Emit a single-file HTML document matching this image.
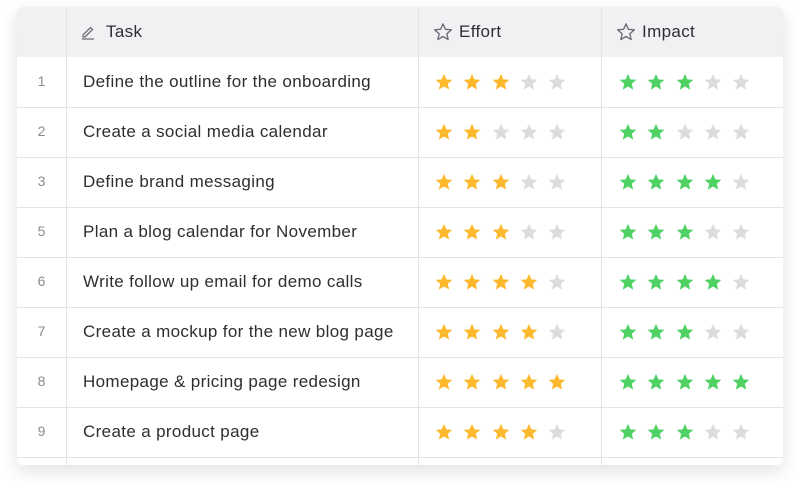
<!DOCTYPE html>
<html><head><style>
body{margin:0;width:800px;height:492px;background:#fff;font-family:"Liberation Sans",sans-serif;position:relative;overflow:hidden}
.card{position:absolute;left:17px;top:7px;width:766px;height:458px;background:#fff;border-radius:6px;box-shadow:0 6px 18px rgba(0,0,0,0.12);overflow:hidden}
.hdr{position:absolute;left:0;top:0;width:766px;height:50px;background:#f0f1f3}
.vl{position:absolute;top:0;width:1px;height:458px;background:#e3e3e5}
.hl{position:absolute;left:0;width:766px;height:1px;background:#e3e3e5}
.t{position:absolute;font-size:17px;letter-spacing:0.35px;color:#2e2e33;line-height:20px;white-space:nowrap}
.n{position:absolute;font-size:14px;color:#8a8a93;width:49px;text-align:center;left:0}
svg.s{position:absolute;width:20px;height:20px}
</style></head><body>
<div class="card" id="c">
<div class="hdr"></div>
</div>
<script>
const c=document.getElementById('c');
let h='';
[49,401,584].forEach(x=>h+=`<div class="vl" style="left:${x}px"></div>`);
for(let i=1;i<9;i++)h+=`<div class="hl" style="top:${50+i*50}px"></div>`;
h+=`<svg style="position:absolute;left:63px;top:17px" width="16" height="16" viewBox="0 0 16 16" fill="none" stroke="#6b6b78" stroke-width="1.3"><path d="M3 11 L10.5 3.5 L12.5 5.5 L5 13 L3 13 Z"/><path d="M2 15 H14"/></svg>`;
h+=`<div class="t" style="left:89px;top:15px">Task</div>`;
const star=(x,y,col,fill)=>`<svg class="s" style="left:${x}px;top:${y}px" viewBox="0 0 24 24"><path d="M12 2.2l2.9 6.6 7.1.6-5.4 4.7 1.6 7-6.2-3.7-6.2 3.7 1.6-7L2 9.4l7.1-.6z" fill="${fill}" stroke="${col}" stroke-width="${fill=='none'?1.6:0}" stroke-linejoin="round"/></svg>`;
h+=star(416,15,'#6b6b78','none')+`<div class="t" style="left:442px;top:15px">Effort</div>`;
h+=star(599,15,'#6b6b78','none')+`<div class="t" style="left:625px;top:15px">Impact</div>`;
const rows=[[1,'Define the outline for the onboarding',3,3],[2,'Create a social media calendar',2,2],[3,'Define brand messaging',3,4],[5,'Plan a blog calendar for November',3,3],[6,'Write follow up email for demo calls',4,4],[7,'Create a mockup for the new blog page',4,3],[8,'Homepage & pricing page redesign',5,5],[9,'Create a product page',4,3]];
rows.forEach((r,i)=>{const y=50+i*50;
h+=`<div class="n" style="top:${y+16}px">${r[0]}</div><div class="t" style="left:66px;top:${y+15}px">${r[1]}</div>`;
for(let k=0;k<5;k++){
h+=star(417+k*28.3,y+15,'',k<r[2]?'#fdb92e':'#dcdcdc');
h+=star(601+k*28.3,y+15,'',k<r[3]?'#4fd164':'#dcdcdc');}
});
c.innerHTML+=h;
</script>
</body></html>
